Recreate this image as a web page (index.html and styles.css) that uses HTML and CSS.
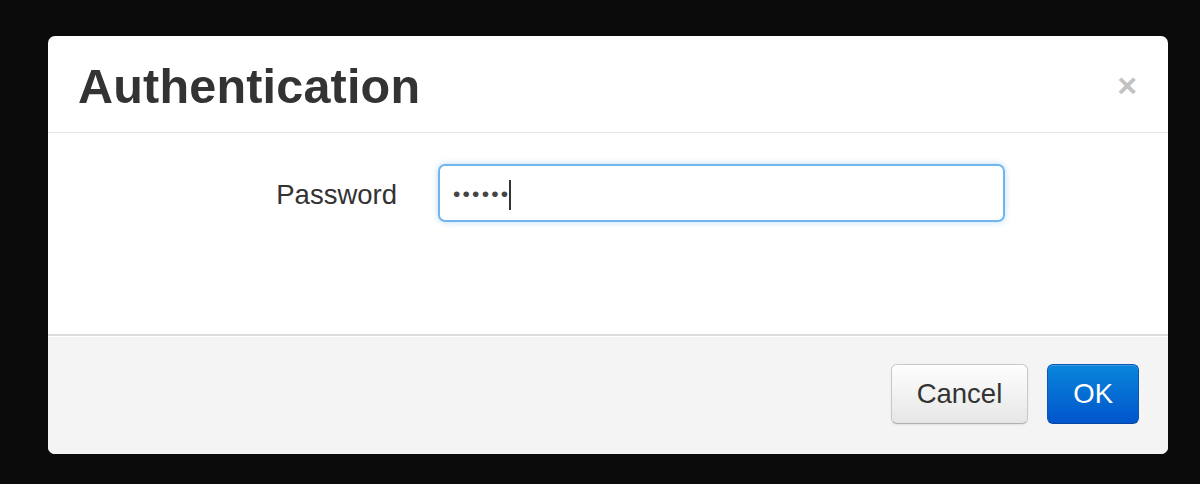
FILE: index.html
```html
<!DOCTYPE html>
<html lang="en">
<head>
    <meta charset="UTF-8">
    <title>Authentication</title>
    <link rel="stylesheet" href="styles.css">
</head>
<body>

    <div class="modal">
        <div class="modal-header">
            <h1>Authentication</h1>
            <button type="button" class="close">&times;</button>
        </div>

        <form class="modal-body">
            <div class="form-row">
                <label for="password">Password</label>
                <div class="fake-input">
                    <span class="dots">&bull;&bull;&bull;&bull;&bull;&bull;</span><span class="caret"></span>
                </div>
            </div>
        </form>

        <div class="modal-footer">
            <button type="button" class="btn">Cancel</button>
            <button type="button" class="btn btn-primary">OK</button>
        </div>
    </div>

</body>
</html>
```

FILE: styles.css
```css
body {
    margin: 0;
    background: #0b0b0b;
    font-family: "Liberation Sans", Arial, sans-serif;
    color: #333;
    height: 484px;
    overflow: hidden;
}

.modal {
    margin: 36px 32px 0 48px;
    width: 1120px;
    height: 418px;
    background: #fff;
    border-radius: 7px;
    overflow: hidden;
    display: flex;
    flex-direction: column;
}

.modal-header {
    height: 96px;
    border-bottom: 1px solid #e6e6e6;
    display: flex;
    align-items: center;
    justify-content: space-between;
    padding: 0 30px;
}

.modal-header h1 {
    margin: 0;
    font-size: 48.5px;
    font-weight: bold;
    color: #333;
    padding-top: 4px;
    letter-spacing: 0.2px;
}

.close {
    background: none;
    border: none;
    padding: 0;
    font-family: "Liberation Sans", Arial, sans-serif;
    font-size: 34px;
    font-weight: bold;
    color: #c2c2c2;
    line-height: 1;
    margin-right: 1px;
    margin-top: 2px;
}

.modal-body {
    flex: 1;
    margin: 0;
    padding-top: 31px;
}

.form-row {
    display: flex;
    align-items: center;
    gap: 41px;
}

.form-row label {
    width: 349px;
    text-align: right;
    font-size: 27.5px;
    color: #333;
    padding-top: 4px;
}

.fake-input {
    height: 54px;
    width: 550px;
    border: 2px solid #72b5ee;
    border-radius: 7px;
    box-shadow: 0 0 6px rgba(100, 170, 240, 0.45);
    display: flex;
    align-items: center;
    padding-left: 13px;
    box-sizing: content-box;
}

.dots {
    font-size: 21px;
    letter-spacing: 2.2px;
    color: #444;
    margin-right: -2px;
    padding-top: 2px;
}

.caret {
    display: inline-block;
    width: 2px;
    height: 30px;
    background: #333;
    margin-left: 1px;
    margin-top: 4px;
}

.modal-footer {
    height: 118px;
    border-top: 2px solid #dcdcdc;
    box-shadow: inset 0 1px #fff;
    background: #f4f4f4;
    display: flex;
    align-items: center;
    justify-content: flex-end;
    gap: 19px;
    padding-right: 29px;
}

.btn {
    height: 60px;
    padding: 0 25px;
    font-family: "Liberation Sans", Arial, sans-serif;
    font-size: 27.5px;
    color: #333;
    border: 1px solid #c9c9c9;
    border-bottom-color: #b0b0b0;
    border-radius: 6px;
    background: linear-gradient(#fefefe, #e6e6e6);
    box-shadow: inset 0 1px #fff, 0 1px 2px rgba(0, 0, 0, 0.08);
    margin-bottom: 3px;
}

.btn-primary {
    color: #fff;
    padding: 0 25px;
    border-color: #0a55b8;
    border-bottom-color: #0846a0;
    background: linear-gradient(#0a86db, #0055cc);
    box-shadow: inset 0 1px rgba(255, 255, 255, 0.2);
}
```
